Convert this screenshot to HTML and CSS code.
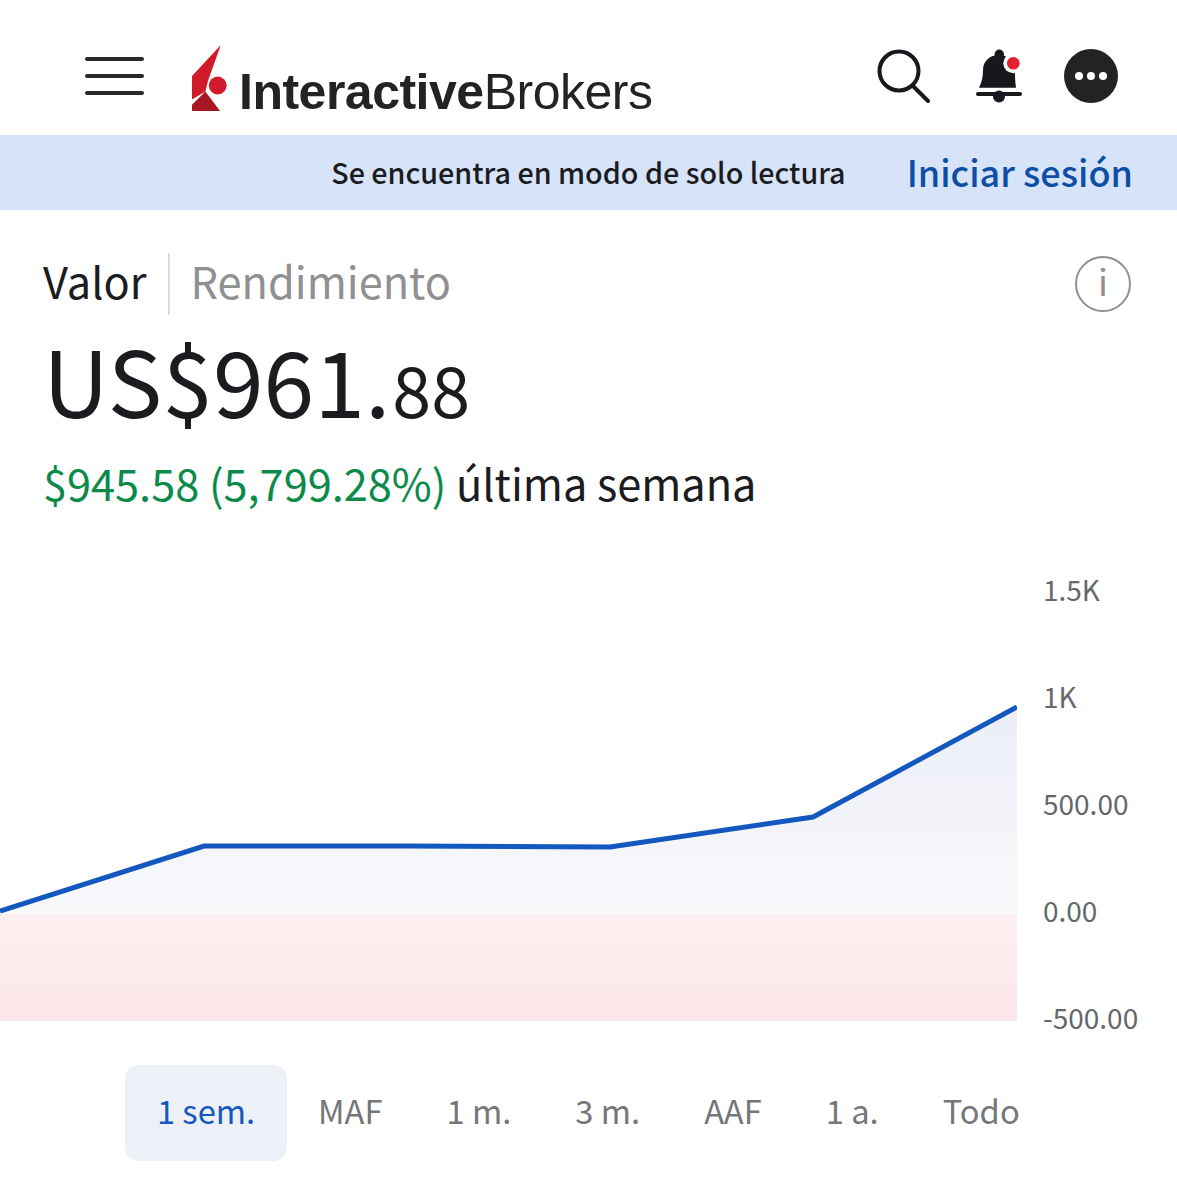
FILE: index.html
```html
<!DOCTYPE html>
<html lang="es">
<head>
  <meta charset="utf-8">
  <title>Interactive Brokers</title>
  <link rel="stylesheet" href="styles.css">
</head>
<body>
  <!-- Top bar -->
  <header class="topbar">
    <div class="menu-icon"><span></span><span></span><span></span></div>
    <div class="logo">
      <svg class="logo-mark" width="35" height="66" viewBox="0 0 34 64">
        <polygon points="28,0 0,30 0,53 13,45 15.5,35" fill="#d01c2a"/>
        <polygon points="0,64 0,58 13,45 27.3,64" fill="#a81822"/>
        <circle cx="25" cy="39.3" r="8.7" fill="#d01c2a"/>
      </svg>
      <span class="logo-text"><b>Interactive</b>Brokers</span>
    </div>
    <div class="top-actions">
      <svg class="search-icon" width="54" height="54" viewBox="0 0 54 54" fill="none" stroke="#16181d" stroke-width="4" stroke-linecap="round">
        <circle cx="22" cy="22" r="19.5"/>
        <line x1="36" y1="37" x2="51" y2="52"/>
      </svg>
      <svg width="48" height="54" viewBox="0 0 48 54">
        <circle cx="24.3" cy="5.3" r="4.7" fill="#16181d"/>
        <path d="M4 38.7 C7 33 8 27 8 21 C8 12 15 6 24 6 C33 6 40 12 40 21 C40 27 40 33 41 38.7 Z" fill="#16181d"/>
        <circle cx="38.3" cy="14.3" r="10" fill="#fff"/>
        <circle cx="38.3" cy="14.3" r="6.3" fill="#e4202e"/>
        <circle cx="24" cy="47.5" r="6" fill="#16181d"/>
        <rect x="1" y="43" width="46" height="4" rx="2" fill="#16181d"/>
      </svg>
      <div class="more-btn"><i></i><i></i><i></i></div>
    </div>
  </header>

  <!-- Read only notice -->
  <div class="notice">
    <span class="notice-text">Se encuentra en modo de solo lectura</span>
    <a class="notice-link">Iniciar sesión</a>
  </div>

  <!-- Value summary -->
  <section class="summary">
    <div class="tabs">
      <span class="tab active">Valor</span>
      <span class="tab">Rendimiento</span>
      <span class="info-icon">i</span>
    </div>
    <div class="amount">US$961.<span class="cents">88</span></div>
    <div class="change"><span class="gain">$945.58 (5,799.28%)</span> última semana</div>
  </section>

  <!-- Chart -->
  <section class="chart">
    <svg class="plot" width="1017" height="430" viewBox="0 0 1017 430">
      <defs>
        <linearGradient id="posFill" x1="0" y1="0" x2="0" y2="1">
          <stop offset="0" stop-color="#ebeef6"/>
          <stop offset="1" stop-color="#f8f9fb"/>
        </linearGradient>
        <linearGradient id="negFill" x1="0" y1="0" x2="0" y2="1">
          <stop offset="0" stop-color="#fdeff1"/>
          <stop offset="1" stop-color="#fbe6e9"/>
        </linearGradient>
      </defs>
      <polygon points="0,320 204,255 406,255 610,256 813,226 1017,116 1017,323 0,323" fill="url(#posFill)"/>
      <rect x="0" y="323" width="1017" height="107" fill="url(#negFill)"/>
      <polyline points="0,320 204,255 406,255 610,256 813,226 1017,116" fill="none" stroke="#1358bf" stroke-width="5"/>
    </svg>
    <div class="axis">
      <span>1.5K</span>
      <span>1K</span>
      <span>500.00</span>
      <span>0.00</span>
      <span>-500.00</span>
    </div>
  </section>

  <!-- Range selector -->
  <nav class="ranges">
    <span class="range selected">1 sem.</span>
    <span class="range">MAF</span>
    <span class="range">1 m.</span>
    <span class="range">3 m.</span>
    <span class="range">AAF</span>
    <span class="range">1 a.</span>
    <span class="range">Todo</span>
  </nav>
</body>
</html>
```

FILE: styles.css
```css
body {
  margin: 0;
  background-color: #fff;
  font-family: "Noto Sans CJK JP", "Noto Sans", sans-serif;
  color: #1b1c1f;
}

.topbar {
  height: 135px;
  display: flex;
  align-items: center;
  padding: 0 59px 0 85px;
}

.menu-icon {
  width: 59px;
  display: flex;
  flex-direction: column;
  gap: 13px;
  margin-top: 17px;
}

.menu-icon span {
  height: 4px;
  border-radius: 2px;
  background-color: #2a2a2c;
}

.logo {
  display: flex;
  align-items: flex-end;
  margin-left: 48px;
  margin-top: 21px;
}

.logo-text {
  font-family: "Liberation Sans", Arial, sans-serif;
  font-size: 50px;
  line-height: 50px;
  letter-spacing: -0.5px;
  color: #232326;
  margin-left: 12px;
  margin-bottom: -6px;
}

.top-actions {
  margin-left: auto;
  display: flex;
  align-items: center;
  gap: 41px;
  margin-top: 16px;
}

.search-icon {
  margin-right: 3px;
}

.more-btn {
  width: 54px;
  height: 54px;
  border-radius: 50%;
  background-color: #232326;
  display: flex;
  align-items: center;
  justify-content: center;
  gap: 4px;
}

.more-btn i {
  width: 8px;
  height: 8px;
  border-radius: 50%;
  background-color: #fff;
}

.notice {
  height: 72px;
  padding: 0 44px 3px 0;
  background-color: #d6e3f8;
  display: flex;
  align-items: center;
  justify-content: flex-end;
}

.notice-text {
  font-size: 28.7px;
  font-weight: 500;
  margin-right: 61px;
}

.notice-link {
  font-size: 36px;
  font-weight: 500;
  color: #0d4ea6;
}

.summary {
  padding: 0 46px 0 43px;
}

.tabs {
  display: flex;
  align-items: center;
  height: 62px;
  margin-top: 43px;
}

.tab {
  font-size: 43.3px;
  line-height: 54px;
  padding-bottom: 8px;
  color: #8f9092;
}

.tab.active {
  color: #1b1c1f;
  padding-right: 21px;
  margin-right: 21px;
  border-right: 2px solid #dcdcdc;
}

.info-icon {
  margin-left: auto;
  width: 52px;
  height: 52px;
  border: 2px solid #8f9092;
  border-radius: 50%;
  color: #8f9092;
  font-size: 36px;
  line-height: 44px;
  text-align: center;
}

.amount {
  font-size: 91.3px;
  line-height: 110px;
  margin-top: 8px;
}

.amount .cents {
  font-size: 70px;
  margin-left: 2px;
}

.change {
  font-size: 43.3px;
  line-height: 60px;
  margin-top: 9px;
}

.gain {
  color: #0b8a4a;
}

.chart {
  display: flex;
  margin-top: 79px;
}

.plot {
  display: block;
  flex: none;
}

.axis {
  display: flex;
  flex-direction: column;
  gap: 67px;
  margin-left: 26px;
  margin-top: -22px;
  color: #66676a;
  font-size: 28px;
  line-height: 40px;
}

.ranges {
  display: flex;
  align-items: center;
  margin-top: 28px;
  margin-left: 125px;
}

.range {
  font-size: 32.7px;
  line-height: 90px;
  padding-bottom: 6px;
  color: #75767a;
  margin-right: 64px;
}

.range.selected {
  width: 162px;
  margin-right: 31px;
  text-align: center;
  color: #1358bf;
  background-color: #edf0f6;
  border-radius: 14px;
}
```
